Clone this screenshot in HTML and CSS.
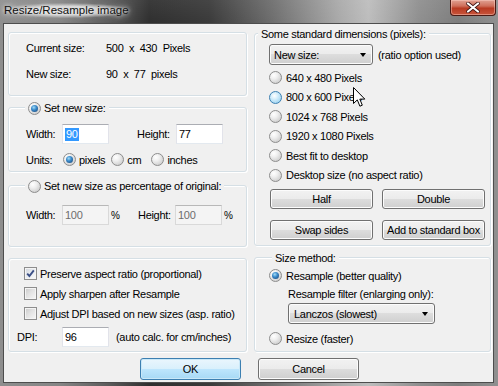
FILE: index.html
```html
<!DOCTYPE html>
<html>
<head>
<meta charset="utf-8">
<link rel="stylesheet" href="styles.css">
</head>
<body>
<div class="window">
  <div class="titlebar">
    <span class="title">Resize/Resample image</span>
    <div class="close">
      <svg width="14" height="11" viewBox="0 0 14 11"><path d="M2 1.5 L12 9.5 M12 1.5 L2 9.5" stroke="#3a1010" stroke-width="3.6" stroke-linecap="round"/><path d="M2 1.5 L12 9.5 M12 1.5 L2 9.5" stroke="#fff" stroke-width="2.2" stroke-linecap="round"/></svg>
    </div>
  </div>
  <div class="client">
    <div class="columns">
      <div class="col">
        <div class="group g-info">
          <div class="info-row"><span class="info-lbl">Current size:</span><span>500 &nbsp;x &nbsp;430 &nbsp;Pixels</span></div>
          <div class="info-row second"><span class="info-lbl">New size:</span><span>90 &nbsp;x &nbsp;77 &nbsp;pixels</span></div>
        </div>

        <div class="group g-new">
          <div class="legend left-legend"><span class="radio checked"></span><span class="legend-text">Set new size:</span></div>
          <div class="field-row">
            <span class="flbl">Width:</span><span class="input"><span class="selected">90</span></span>
            <span class="flbl hlbl">Height:</span><span class="input">77</span>
          </div>
          <div class="units-row">
            <span class="ulbl">Units:</span>
            <span class="opt opt-px"><span class="radio checked"></span>pixels</span>
            <span class="opt opt-cm"><span class="radio"></span>cm</span>
            <span class="opt"><span class="radio"></span>inches</span>
          </div>
        </div>

        <div class="group g-pct">
          <div class="legend left-legend"><span class="radio"></span><span class="legend-text">Set new size as percentage of original:</span></div>
          <div class="field-row pct-row">
            <span class="flbl">Width:</span><span class="input disabled">100</span><span class="pct">%</span>
            <span class="flbl hlbl2">Height:</span><span class="input disabled">100</span><span class="pct">%</span>
          </div>
        </div>

        <div class="group g-opts">
          <div class="check-row"><span class="checkbox checked"><svg width="11" height="11" viewBox="0 0 11 11"><path d="M2.2 5.6 L4.4 8 L8.8 2.4" fill="none" stroke="#3b4f86" stroke-width="1.9"/></svg></span>Preserve aspect ratio (proportional)</div>
          <div class="check-row"><span class="checkbox"></span>Apply sharpen after Resample</div>
          <div class="check-row"><span class="checkbox"></span>Adjust DPI based on new sizes (asp. ratio)</div>
          <div class="dpi-row"><span class="dpi-lbl">DPI:</span><span class="input">96</span><span class="dpi-note">(auto calc. for cm/inches)</span></div>
        </div>
      </div>

      <div class="col">
        <div class="group g-std">
          <div class="legend right-legend">Some standard dimensions (pixels):</div>
          <div class="select-row">
            <span class="combo std-combo"><span>New size:</span><span class="arrow"></span></span>
            <span class="note">(ratio option used)</span>
          </div>
          <div class="radio-list">
            <div class="ropt"><span class="radio"></span>640 x 480 Pixels</div>
            <div class="ropt"><span class="radio hover"></span>800 x 600 Pixels</div>
            <div class="ropt"><span class="radio"></span>1024 x 768 Pixels</div>
            <div class="ropt"><span class="radio"></span>1920 x 1080 Pixels</div>
            <div class="ropt"><span class="radio"></span>Best fit to desktop</div>
            <div class="ropt"><span class="radio"></span>Desktop size (no aspect ratio)</div>
          </div>
          <div class="btn-grid">
            <span class="btn">Half</span>
            <span class="btn">Double</span>
            <span class="btn">Swap sides</span>
            <span class="btn">Add to standard box</span>
          </div>
        </div>

        <div class="group g-method">
          <div class="legend right-legend">Size method:</div>
          <div class="ropt first"><span class="radio checked"></span>Resample (better quality)</div>
          <div class="filter-lbl">Resample filter (enlarging only):</div>
          <span class="combo filter-combo"><span>Lanczos (slowest)</span><span class="arrow"></span></span>
          <div class="ropt resize"><span class="radio"></span>Resize (faster)</div>
        </div>
      </div>
    </div>
    <div class="dlg-buttons">
      <span class="btn dbtn default">OK</span>
      <span class="btn dbtn">Cancel</span>
    </div>
  </div>
  <svg class="cursor" width="13" height="21" viewBox="0 0 13 21"><path d="M0.5 0.5 L0.5 16.5 L4.3 12.9 L6.9 19.2 L9.3 18.2 L6.8 12.1 L11.8 12.1 Z" fill="#fff" stroke="#000" stroke-width="1" stroke-linejoin="miter"/></svg>
</div>
</body>
</html>
```

FILE: styles.css
```css
html, body {
  margin: 0;
  padding: 0;
}
body {
  width: 498px;
  height: 386px;
  overflow: hidden;
  font-family: "Liberation Sans", Arial, sans-serif;
  font-size: 11px;
  letter-spacing: -0.3px;
  color: #000;
}
.window {
  position: relative;
  width: 498px;
  height: 386px;
  display: flex;
  flex-direction: column;
  background:
    linear-gradient(180deg, rgba(255,255,255,0.06) 0, rgba(0,0,0,0) 23px),
    linear-gradient(90deg, #8e8e8e 0, #858585 12%, #5a5a5a 22%, #2f2f2f 30%, #3a3a3a 42%, #6f6f6f 55%, #a9a9a9 68%, #bdbdbd 74%, #8f8f8f 84%, #7d7d7d 92%, #909090 100%);
}
.titlebar {
  height: 23px;
  display: flex;
  justify-content: space-between;
  align-items: flex-start;
}
.title {
  margin: 3px 0 0 2px;
  padding: 0 2px;
  font-size: 11.5px;
  letter-spacing: 0;
  line-height: 15px;
  color: #101010;
  background: radial-gradient(ellipse at center, rgba(235,235,235,0.75) 40%, rgba(235,235,235,0) 72%);
  text-shadow: 0 0 4px rgba(255,255,255,0.9), 0 0 8px rgba(255,255,255,0.8);
}
.close {
  width: 46px;
  height: 16px;
  margin-right: 2px;
  box-sizing: border-box;
  border: 1px solid #4a1a14;
  border-top: none;
  border-radius: 0 0 4px 4px;
  background: linear-gradient(180deg, #e0a193 0, #cf6f5b 40%, #b83a22 55%, #c8553c 100%);
  box-shadow: inset 0 0 0 1px rgba(255,210,200,0.45);
  display: flex;
  align-items: center;
  justify-content: center;
}
.client {
  margin: 0 4px 0 3px;
  height: 360px;
  box-sizing: border-box;
  border: 1px solid #4d4d4d;
  background: #f0f0f0;
  padding: 8px 0 0 4px;
}
.columns {
  display: grid;
  grid-template-columns: 239px 237px;
  column-gap: 7px;
}
.col {
  display: flex;
  flex-direction: column;
}
.group {
  box-sizing: border-box;
  border: 1px solid #d5dfe5;
  border-radius: 3px;
  box-shadow: inset 1px 1px 0 #fff, 1px 1px 0 #fff;
}
.legend {
  display: flex;
  align-items: center;
  height: 14px;
  line-height: 14px;
  margin-top: -7px;
  padding: 0 3px;
  width: max-content;
  background: #f0f0f0;
  white-space: nowrap;
}
.left-legend { margin-left: 16px; }
.legend-text { margin-left: 3px; }
.right-legend { margin-left: 3px; }

/* info box */
.g-info {
  height: 64px;
  padding: 9px 0 0 17px;
}
.info-row {
  display: flex;
  line-height: 13px;
  height: 13px;
}
.info-row.second { margin-top: 13px; }
.info-lbl { width: 80px; }

/* set new size */
.g-new {
  height: 65px;
  margin-top: 11px;
}
.field-row {
  display: flex;
  align-items: center;
  height: 20px;
  margin: 9px 0 0 17px;
}
.flbl { width: 36px; }
.hlbl { margin-left: 28px; width: 39px; }
.input {
  box-sizing: border-box;
  width: 47px;
  height: 20px;
  line-height: 18px;
  padding-left: 2px;
  background: #fff;
  border: 1px solid #e2e3ea;
  border-top-color: #abadb3;
  border-bottom-color: #e3e9ef;
}
.input.disabled {
  background: #f4f4f4;
  color: #6d6d6d;
  border-color: #d9d9d9;
  border-top-color: #b8b8b8;
}
.selected {
  background: #3399ff;
  color: #fff;
  padding: 0 1px;
  display: inline-block;
  line-height: 13px;
}
.units-row {
  display: flex;
  align-items: center;
  height: 15px;
  margin: 8px 0 0 17px;
}
.ulbl { width: 37px; }
.opt {
  display: flex;
  align-items: center;
}
.opt-px { margin-right: 6px; }
.opt-cm { margin-right: 10px; }
.opt .radio { margin-right: 3px; }
.radio {
  position: relative;
  display: inline-block;
  flex: none;
  width: 13px;
  height: 13px;
  box-sizing: border-box;
  border-radius: 50%;
  border: 1px solid #8d8d8d;
  background: radial-gradient(circle at 35% 30%, #ffffff 0, #efefef 35%, #d2d2d2 75%, #c4c4c4 100%);
}
.radio.checked::after {
  content: "";
  position: absolute;
  left: 2px;
  top: 2px;
  width: 7px;
  height: 7px;
  border-radius: 50%;
  background: radial-gradient(circle at 40% 35%, #a4dcf6 0, #3b8ccc 40%, #1e4f84 85%);
}
.radio.hover {
  border-color: #3c7fb1;
  background: radial-gradient(circle at 40% 35%, #ffffff 0, #d4eefb 35%, #9fd4f1 80%, #86c5e8 100%);
}

/* percentage */
.g-pct {
  height: 62px;
  margin-top: 13px;
}
.pct-row { margin-top: 12px; }
.pct { width: 10px; margin-left: 2px; font-size: 10px; }
.hlbl2 { margin-left: 17px; width: 37px; }

/* options */
.g-opts {
  height: 94px;
  margin-top: 11px;
  padding: 8px 0 0 8px;
}
.check-row {
  display: flex;
  align-items: center;
  height: 13px;
  margin: 0 0 7px 7px;
  white-space: nowrap;
}
.checkbox {
  display: flex;
  align-items: center;
  justify-content: center;
  flex: none;
  width: 13px;
  height: 13px;
  box-sizing: border-box;
  margin-right: 3px;
  border: 1px solid #8d8d8d;
  background: linear-gradient(135deg, #c9c9c9 0, #e2e2e2 45%, #f7f7f7 100%);
  box-shadow: inset 0 0 0 1px #f4f4f4;
}
.checkbox.checked {
  background: linear-gradient(135deg, #cfd3da 0, #e9ecf0 50%, #fafafa 100%);
}
.dpi-row {
  display: flex;
  align-items: center;
  height: 20px;
  margin-top: 0;
  white-space: nowrap;
}
.dpi-lbl { width: 45px; }
.dpi-note { margin-left: 7px; }

/* standard dims */
.g-std {
  height: 213px;
  margin-top: 1px;
}
.select-row {
  display: flex;
  align-items: center;
  margin: 3px 0 0 14px;
}
.combo {
  box-sizing: border-box;
  display: flex;
  align-items: center;
  justify-content: space-between;
  height: 21px;
  padding: 0 6px 0 4px;
  border: 1px solid #707070;
  border-radius: 3px;
  background: linear-gradient(180deg, #f2f2f2 0, #ebebeb 50%, #dddddd 50%, #cfcfcf 100%);
  box-shadow: inset 0 0 0 1px #fcfcfc;
}
.std-combo { width: 104px; }
.arrow {
  width: 0;
  height: 0;
  border-left: 3.5px solid transparent;
  border-right: 3.5px solid transparent;
  border-top: 4px solid #000;
}
.note { margin-left: 5px; }
.radio-list {
  margin: 3px 0 0 14px;
}
.ropt {
  display: flex;
  align-items: center;
  height: 19.5px;
  white-space: nowrap;
}
.ropt .radio { margin-right: 4px; }
.btn-grid {
  display: grid;
  grid-template-columns: 103px 103px;
  column-gap: 9px;
  row-gap: 11px;
  margin: 4px 0 0 15px;
}
.btn {
  box-sizing: border-box;
  display: flex;
  align-items: center;
  justify-content: center;
  height: 20px;
  border: 1px solid #707070;
  border-radius: 3px;
  background: linear-gradient(180deg, #f2f2f2 0, #ebebeb 50%, #dddddd 50%, #cfcfcf 100%);
  box-shadow: inset 0 0 0 1px #fcfcfc;
  white-space: nowrap;
}

/* size method */
.g-method {
  height: 95px;
  margin-top: 11px;
  padding-left: 14px;
}
.ropt.first { margin-top: 1px; height: 19px; }
.filter-lbl {
  margin: 3px 0 0 19px;
  line-height: 13px;
  height: 13px;
}
.filter-combo {
  width: 147px;
  margin: 2px 0 0 19px;
  padding-left: 5px;
}
.ropt.resize { margin-top: 5px; height: 19px; }

/* dialog buttons */
.dlg-buttons {
  display: flex;
  gap: 17px;
  margin: 6px 0 0 132px;
}
.dbtn {
  width: 101px;
  height: 22px;
}
.dbtn.default {
  border-color: #3c7fb1;
  background: linear-gradient(180deg, #eaf6fd 0, #d9f0fc 50%, #bee6fd 50%, #a7d9f5 100%);
  box-shadow: inset 0 0 0 1px #c9e8f8;
}
.cursor {
  position: absolute;
  left: 353px;
  top: 87px;
}
```
